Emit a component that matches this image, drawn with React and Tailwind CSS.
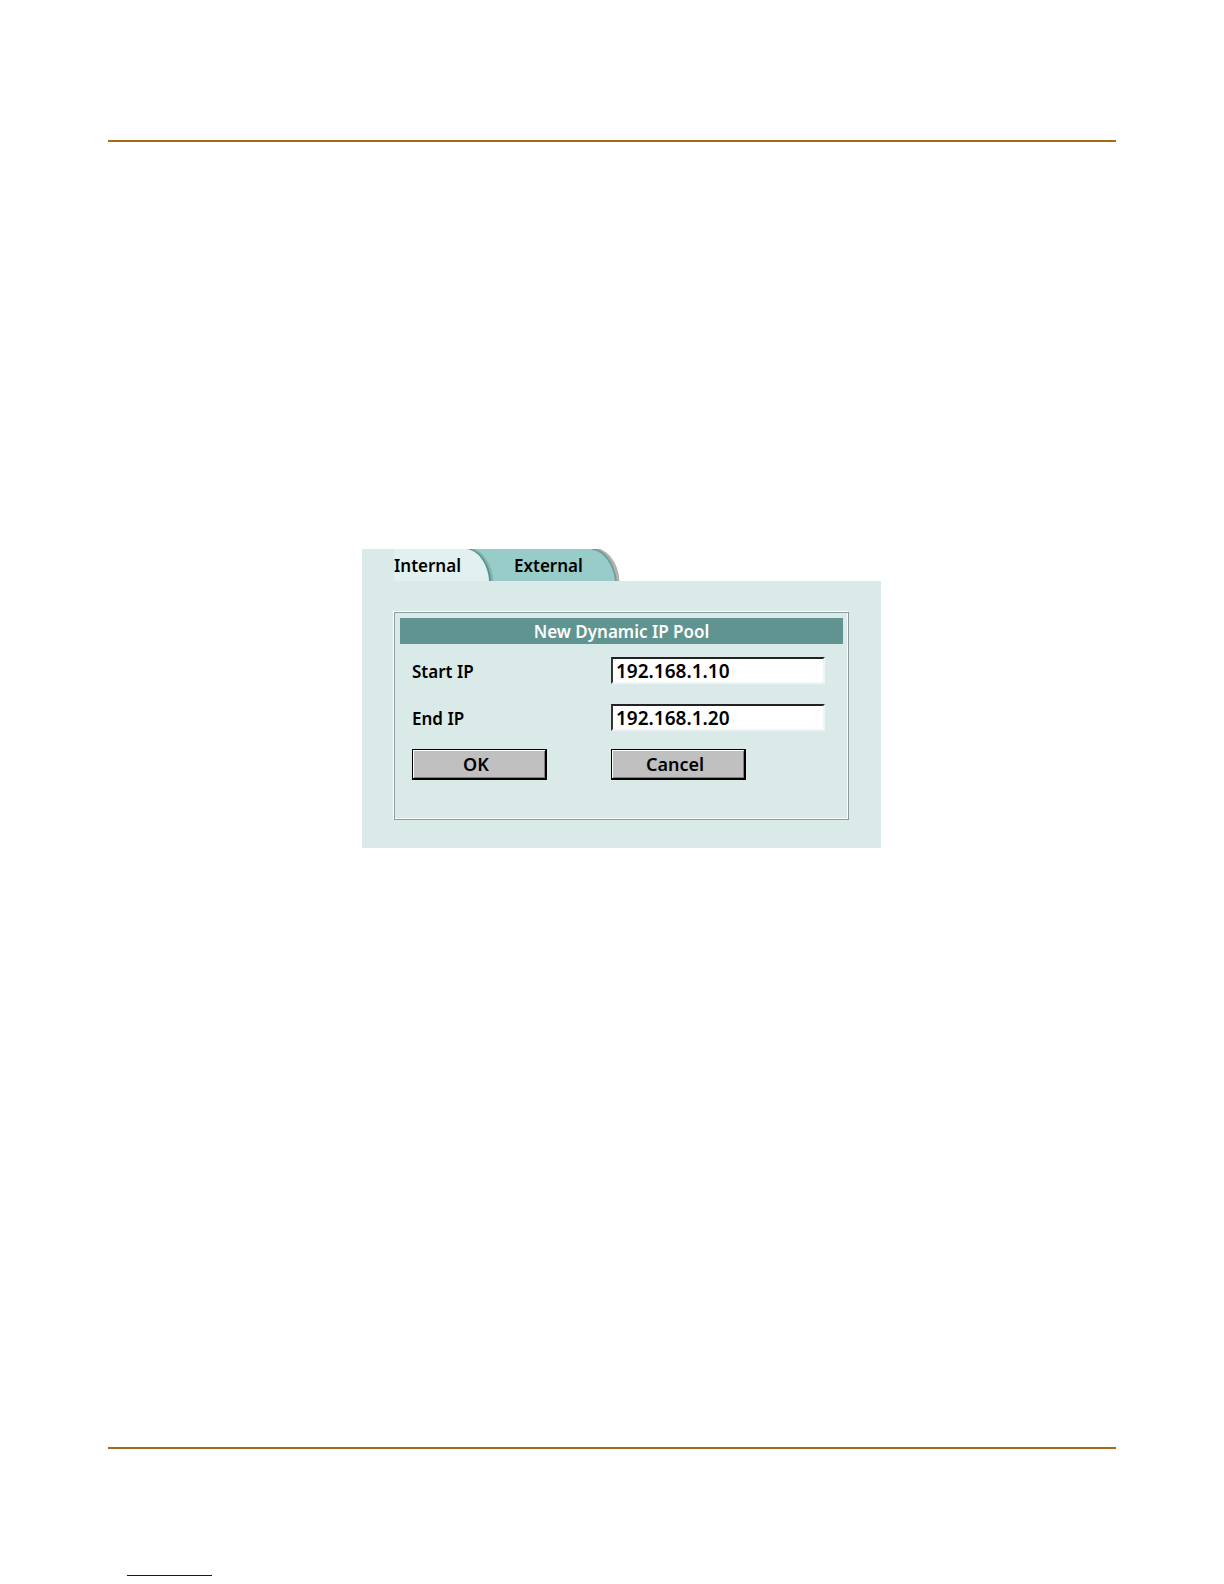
import React, { useState } from 'react';

const TabEdge = () => (
    <svg width="28" height="32" viewBox="0 0 28 32" className="shrink-0" aria-hidden="true">
        <path d="M0 0 H28 V32 H0 Z" fill="#97ccc8" />
        <path d="M0 0 C14 1 24 16 25 32" fill="none" stroke="#82b5b2" strokeWidth="5" />
        <path d="M0 0 C14 1 23 16 24 32" fill="none" stroke="#5f9391" strokeWidth="2" />
        <path d="M0 0 C13 1 22 16 23 32 H0 Z" fill="#e2f1ef" />
    </svg>
);

const TabEnd = () => (
    <svg width="28" height="32" viewBox="0 0 28 32" className="shrink-0" aria-hidden="true">
        <path d="M0 0 C14 0 25 14 26 32" fill="none" stroke="#b5b1ad" strokeWidth="3" />
        <path d="M0 0 C12 1 22 14 24 32 H0 Z" fill="#97ccc8" />
        <path d="M0 0 C12 1 22 14 24 32" fill="none" stroke="#6f9f9b" strokeWidth="2" />
    </svg>
);

const Field = ({ id, label, value, onChange }) => (
    <>
        <label htmlFor={id} className="text-[17px] leading-[29px]">{label}</label>
        <input id={id} type="text" value={value} onChange={e => onChange(e.target.value)} className="w-[214px] h-[27px] pl-[3px] bg-white border-2 border-t-[#222] border-l-[#333] border-b-[#eef5f4] border-r-[#eef5f4] text-[19px] leading-none outline-none" />
    </>
);

const PushButton = ({ children, type }) => (
    <button type={type} className="w-[135px] h-[31px] pr-1.5 bg-[#c0c0c0] border border-b-2 border-r-2 border-black shadow-[inset_1px_1px_0_#fff,inset_-1px_-1px_0_#808080] text-lg leading-none">{children}</button>
);

const PoolForm = () => {
    const [startIp, setStartIp] = useState('192.168.1.10');
    const [endIp, setEndIp] = useState('192.168.1.20');

    return (
        <form onSubmit={e => e.preventDefault()} className="border border-[#8c9c9b] p-[5px] pb-[39px] shadow-[-1px_-1px_0_#fff,inset_-1px_-1px_0_#fff]">
            <h1 className="bg-[#5f9490] text-white text-center text-[17px] leading-[28px] h-[26px]">New Dynamic IP Pool</h1>
            <div className="grid grid-cols-[199px_1fr] auto-rows-[27px] gap-y-5 pt-[13px] pl-3">
                <Field id="start-ip" label="Start IP" value={startIp} onChange={setStartIp} />
                <Field id="end-ip" label="End IP" value={endIp} onChange={setEndIp} />
            </div>
            <div className="grid grid-cols-[199px_1fr] pt-[18px] pl-3">
                <PushButton type="submit">OK</PushButton>
                <PushButton type="button">Cancel</PushButton>
            </div>
        </form>
    );
};

const App = () => {
    return (
        <div className="min-h-screen flex flex-col bg-white text-black font-semibold font-['Noto_Sans',sans-serif]">
            <div className="flex-1 flex flex-col mx-[108px] mt-[140px] border-t-2 border-b-2 border-[#a56a14]">
                <main className="w-[519px] ml-[254px] mt-[407px] mb-[590px]">
                    <div role="tablist" className="flex w-fit h-8 pl-8 bg-[#d9eae8] text-[17px] leading-[34px]">
                        <button type="button" role="tab" aria-selected="true" className="w-[72px] text-left bg-[#e2f1ef]">Internal</button>
                        <TabEdge />
                        <button type="button" role="tab" aria-selected="false" className="pl-5 w-[98px] text-left bg-[#97ccc8]">External</button>
                        <div className="bg-white">
                            <TabEnd />
                        </div>
                    </div>
                    <div className="bg-[#d9eae8] pt-[31px] px-8 pb-7">
                        <PoolForm />
                    </div>
                </main>
            </div>
            <footer className="h-[135px] pl-[127px] pt-[126px]">
                <div className="w-[85px] h-px bg-[#0a0a8c]" />
            </footer>
        </div>
    );
};

export default App;
